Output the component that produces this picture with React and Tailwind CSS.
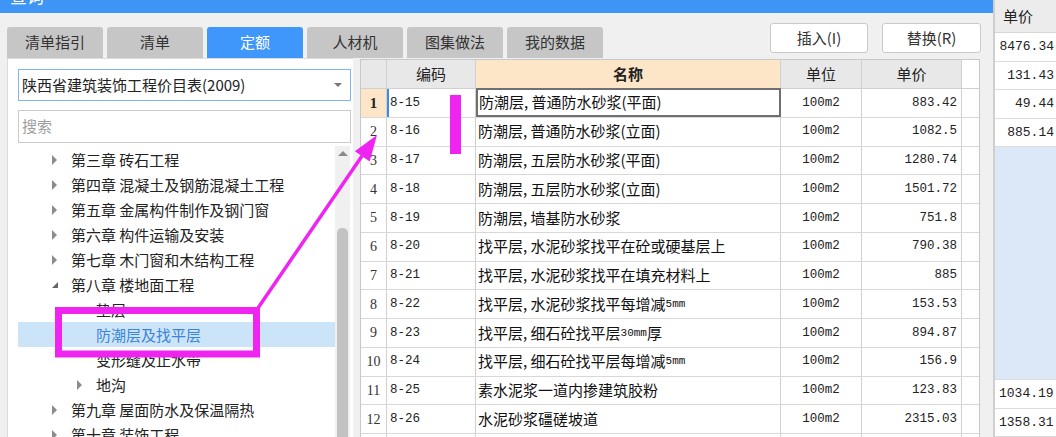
import React from "react";

const rows = [
  ["8-15", "防潮层, 普通防水砂浆(平面)", "883.42"],
  ["8-16", "防潮层, 普通防水砂浆(立面)", "1082.5"],
  ["8-17", "防潮层, 五层防水砂浆(平面)", "1280.74"],
  ["8-18", "防潮层, 五层防水砂浆(立面)", "1501.72"],
  ["8-19", "防潮层, 墙基防水砂浆", "751.8"],
  ["8-20", "找平层, 水泥砂浆找平在砼或硬基层上", "790.38"],
  ["8-21", "找平层, 水泥砂浆找平在填充材料上", "885"],
  ["8-22", "找平层, 水泥砂浆找平每增减", "153.53", "5mm"],
  ["8-23", "找平层, 细石砼找平层", "894.87", "30mm", "厚"],
  ["8-24", "找平层, 细石砼找平层每增减", "156.9", "5mm"],
  ["8-25", "素水泥浆一道内掺建筑胶粉", "123.83"],
  ["8-26", "水泥砂浆礓磋坡道", "2315.03"],
];

const tabs = ["清单指引", "清单", "定额", "人材机", "图集做法", "我的数据"];

const tree = [
  { level: 0, text: "第三章 砖石工程", arrow: "right" },
  { level: 0, text: "第四章 混凝土及钢筋混凝土工程", arrow: "right" },
  { level: 0, text: "第五章 金属构件制作及钢门窗", arrow: "right" },
  { level: 0, text: "第六章 构件运输及安装", arrow: "right" },
  { level: 0, text: "第七章 木门窗和木结构工程", arrow: "right" },
  { level: 0, text: "第八章 楼地面工程", arrow: "down" },
  { level: 1, text: "垫层", arrow: null },
  { level: 1, text: "防潮层及找平层", arrow: null, selected: true },
  { level: 1, text: "变形缝及止水带", arrow: null },
  { level: 1, text: "地沟", arrow: "right" },
  { level: 0, text: "第九章 屋面防水及保温隔热", arrow: "right" },
  { level: 0, text: "第十章 装饰工程", arrow: "right" },
];

function Arrow({ dir }) {
  if (dir === "right")
    return <span className="block w-0 h-0 border-y-[5px] border-y-transparent border-l-[5px] border-l-[#8c8c8c]" />;
  if (dir === "down")
    return <span className="block w-0 h-0 border-l-[6px] border-l-transparent border-b-[6px] border-b-[#666]" />;
  return null;
}

export default function App() {
  const sans = "font-['Noto_Sans_CJK_SC','Noto_Sans',sans-serif]";
  const mono = "font-['Liberation_Mono','Noto_Sans_CJK_SC',monospace]";
  return (
    <div className={`relative w-[1056px] h-[437px] overflow-hidden flex bg-[#f0f0f0] ${sans}`}>
      {/* main area */}
      <div className="w-[993px] flex flex-col shrink-0">
        <div className="h-[13px] bg-[#3f95f5] overflow-hidden shrink-0">
          <div className="-mt-[13px] ml-[10px] text-white text-[17px] leading-[18px]">查询</div>
        </div>
        <div className="h-[45px] flex items-end pl-[7px] pr-[12px] shrink-0">
          <div className="flex gap-[4px]">
            {tabs.map((t, i) => (
              <div
                key={t}
                className={
                  i === 2
                    ? "w-[96px] h-[31px] rounded-t-[3px] bg-[#3f96fb] text-white text-[15px] flex items-center justify-center"
                    : "w-[96px] h-[31px] rounded-t-[3px] bg-[#c6c6c6] text-[#333] text-[15px] flex items-center justify-center"
                }
              >
                {t}
              </div>
            ))}
          </div>
          <div className="ml-auto self-start mt-[10px] flex gap-[14px]">
            <div className="w-[98px] h-[30px] bg-white border border-[#c9c9c9] rounded-[3px] flex items-center justify-center text-[15px] text-[#333]">插入(I)</div>
            <div className="w-[99px] h-[30px] bg-white border border-[#c9c9c9] rounded-[3px] flex items-center justify-center text-[15px] text-[#333]">替换(R)</div>
          </div>
        </div>
        <div className="flex flex-1 min-h-0">
          {/* left panel */}
          <div className="ml-[7px] w-[346px] bg-white border-l border-t border-[#dcdcdc] flex flex-col">
            <div className="mt-[10px] ml-[10px] w-[333px] h-[32px] border border-[#80b6ee] flex items-center pl-[3px] pr-[8px] text-[15px] text-[#222]">
              <span>陕西省建筑装饰工程价目表(2009)</span>
              <span className="ml-auto block w-0 h-0 border-x-[4px] border-x-transparent border-t-[4px] border-t-[#777]" />
            </div>
            <div className="mt-[9px] ml-[10px] w-[333px] h-[33px] border border-[#cbcbcb] flex items-center pl-[3px] text-[15px] text-[#a0a0a0]">
              搜索
            </div>
            <div className="mt-[3px] ml-[10px] flex flex-1 min-h-0">
              <div className="w-[317px] pt-[1px]">
                {tree.map((n) => (
                  <div
                    key={n.text}
                    className={
                      n.selected
                        ? "h-[25px] flex items-center bg-[#cce4f8] text-[#3b84d8] text-[15px]"
                        : "h-[25px] flex items-center text-[#222] text-[15px]"
                    }
                  >
                    <div className={n.level === 0 ? "w-[53px] flex pl-[34px]" : "w-[78px] flex pl-[59px]"}>
                      <Arrow dir={n.arrow} />
                    </div>
                    <span className="whitespace-nowrap leading-none">{n.text}</span>
                  </div>
                ))}
              </div>
              <div className="w-[15px] bg-[#f0f0f0] flex flex-col items-center">
                <span className="mt-[5px] block w-0 h-0 border-x-[5px] border-x-transparent border-b-[5px] border-b-[#8a8a8a]" />
                <div className="mt-[72px] w-[11px] flex-1 bg-[#c2c2c2] rounded-t-[5px]" />
              </div>
            </div>
          </div>
          {/* table */}
          <div className="ml-[7px] mt-[1px] w-[620px] bg-white border-l border-r border-t border-[#c8c8c8] flex flex-col">
            <div className="h-[29px] flex border-b border-[#d0d0d0] text-[15px] text-[#222] shrink-0">
              <div className="w-[26px] bg-[#e8e8e8] border-r border-[#d0d0d0]" />
              <div className="w-[89px] bg-[#e8e8e8] border-r border-[#d0d0d0] flex items-center justify-center">编码</div>
              <div className="w-[305px] bg-[#fde6c8] border-r border-[#d0d0d0] flex items-center justify-center font-bold">名称</div>
              <div className="w-[81px] bg-[#e8e8e8] border-r border-[#d0d0d0] flex items-center justify-center">单位</div>
              <div className="w-[100px] bg-[#e8e8e8] border-r border-[#d0d0d0] flex items-center justify-center">单价</div>
            </div>
            {rows.map((r, i) => (
              <div key={r[0]} className="h-[28.75px] flex border-b border-[#d8d8d8] shrink-0">
                <div
                  className={
                    i === 0
                      ? "w-[26px] bg-[#fde6c8] border-r border-[#d0d0d0] flex items-center justify-center font-['Liberation_Serif',serif] font-bold text-[15px] text-[#222]"
                      : "w-[26px] border-r border-[#d0d0d0] flex items-center justify-center font-['Liberation_Serif',serif] text-[14px] text-[#333]"
                  }
                >
                  {i + 1}
                </div>
                <div
                  className={
                    i === 0
                      ? `w-[89px] border-l-2 border-l-[#3a8ee6] border-r border-r-[#d0d0d0] flex items-center pl-[1px] text-[12.5px] text-[#222] ${mono}`
                      : `w-[89px] border-r border-[#d0d0d0] flex items-center pl-[3px] text-[12.5px] text-[#222] ${mono}`
                  }
                >
                  {r[0]}
                </div>
                <div
                  className={
                    i === 0
                      ? "w-[305px] border-2 border-[#707070] -mt-[1px] flex items-center pl-[1px] text-[15px] text-[#111] whitespace-nowrap overflow-hidden"
                      : "w-[305px] border-r border-[#d0d0d0] flex items-center pl-[2px] text-[15px] text-[#111] whitespace-nowrap overflow-hidden"
                  }
                >
                  {r[1]}
                  {r[3] && <span className={`text-[11px] ${mono}`}>{r[3]}</span>}
                  {r[4]}
                </div>
                <div className={`w-[81px] border-r border-[#d0d0d0] flex items-center justify-center text-[12.5px] text-[#222] ${mono}`}>100m2</div>
                <div className={`w-[100px] border-r border-[#d0d0d0] flex items-center justify-end pr-[4px] text-[12.5px] text-[#222] ${mono}`}>{r[2]}</div>
              </div>
            ))}
            <div className="h-[10px] flex shrink-0">
              <div className="w-[26px] border-r border-[#d0d0d0]" />
              <div className="w-[89px] border-r border-[#d0d0d0]" />
              <div className="w-[305px] border-r border-[#d0d0d0]" />
              <div className="w-[81px] border-r border-[#d0d0d0]" />
              <div className="w-[100px] border-r border-[#d0d0d0]" />
            </div>
          </div>
        </div>
      </div>
      {/* right strip */}
      <div className={`w-[63px] shrink-0 border-l-2 border-[#cfcfcf] bg-white flex flex-col ${mono}`}>
        <div className={`h-[33px] bg-[#ececec] border-b border-[#d6d6d6] flex items-center pl-[8px] text-[15px] text-[#222] ${sans}`}>单价</div>
        {["8476.34", "131.43", "49.44", "885.14"].map((v) => (
          <div key={v} className="h-[28.5px] border-b border-[#dcdcdc] flex items-center justify-end pr-[2px] text-[13px] text-[#222] whitespace-nowrap">{v}</div>
        ))}
        <div className="h-[233px] bg-[#dce8f8] border-b border-[#dcdcdc]" />
        {["1034.19", "1358.31"].map((v) => (
          <div key={v} className="h-[28.5px] border-b border-[#dcdcdc] flex items-center pl-[4px] text-[13px] text-[#222] whitespace-nowrap">{v}</div>
        ))}
      </div>
      {/* annotation overlay */}
      <svg className="absolute inset-0 pointer-events-none" width="1056" height="437" viewBox="0 0 1056 437">
        <rect x="58.5" y="310.5" width="198" height="43.5" fill="none" stroke="#f024f0" strokeWidth="7" />
        <line x1="258" y1="308" x2="362" y2="156" stroke="#f024f0" strokeWidth="3.5" />
        <polygon points="377,135 369.7,161.5 354.9,151.3" fill="#f024f0" />
        <rect x="450" y="95" width="11" height="59" fill="#f024f0" />
      </svg>
    </div>
  );
}
